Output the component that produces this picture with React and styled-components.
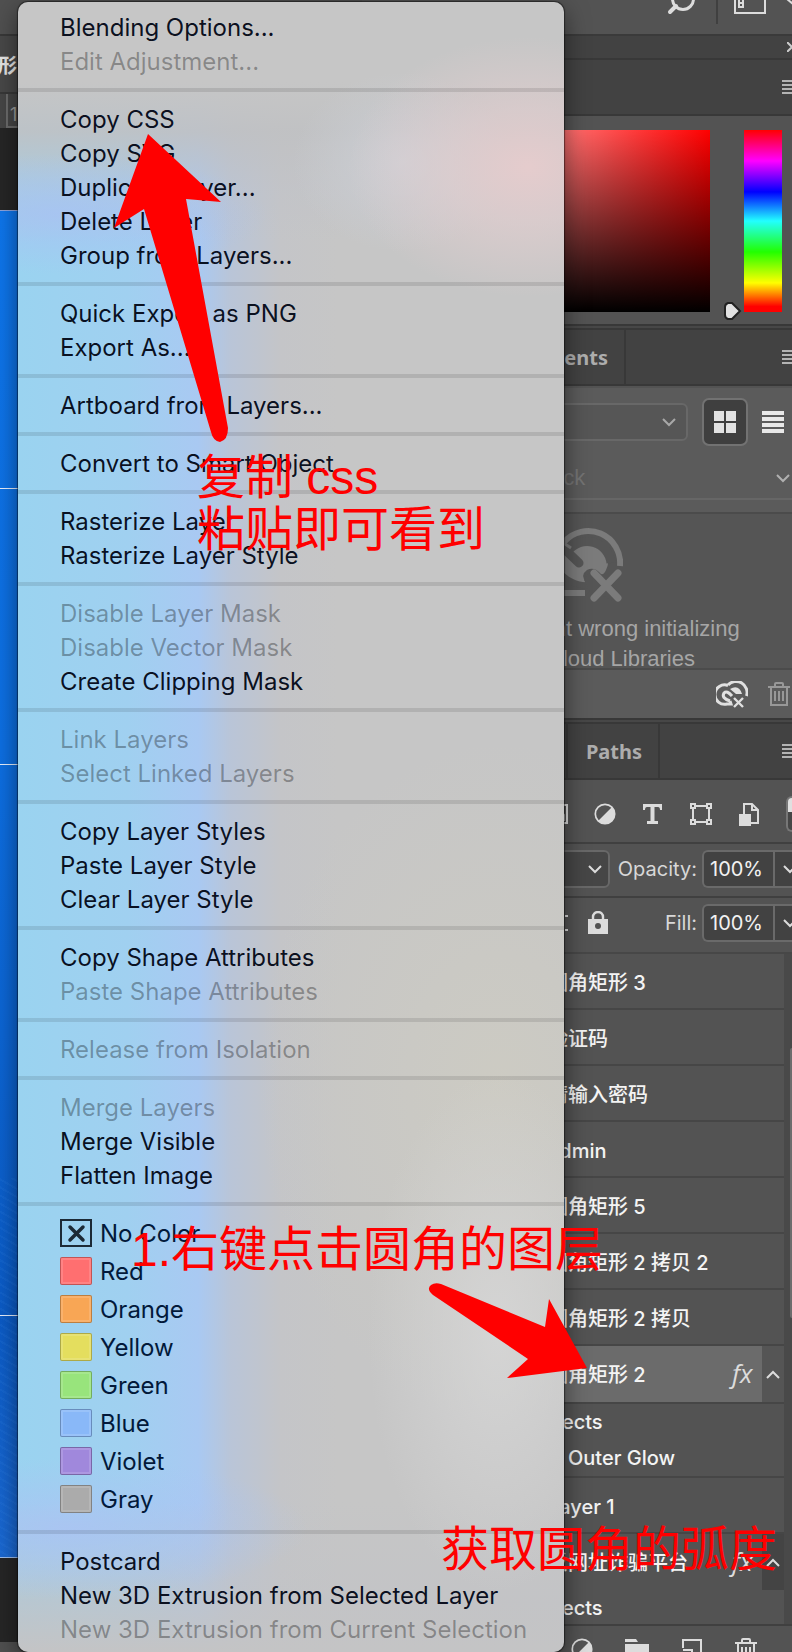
import React from 'react';
import styled, { createGlobalStyle } from 'styled-components';

const Global = createGlobalStyle`
  * { box-sizing: border-box; }
  body { margin: 0; background: #262626; }
  button, input, select { font: inherit; color: inherit; }
  button { border: 0; padding: 0; background: none; text-align: left; }
  svg { display: block; flex: none; }
`;

const App = styled.div`
  position: relative;
  display: flex;
  min-height: 100vh;
  overflow: hidden;
  font-family: Inter, "Noto Sans CJK SC", sans-serif;
  font-size: 20px;
  color: #e6e6e6;
`;

/* ---------- document area ---------- */
const Workspace = styled.main`
  flex: 1;
  min-width: 0;
  display: flex;
  flex-direction: column;
  overflow: hidden;
`;
const OptionsBar = styled.div`
  height: 36px;
  background: #505050;
  border-bottom: 2px solid #383838;
`;
const DocumentTab = styled.div`
  height: 58px;
  line-height: 60px;
  background: #484848;
  border-bottom: 2px solid #383838;
  font-weight: 700;
  text-indent: -3px;
`;
const Ruler = styled.div`
  height: 34px;
  margin-left: 6px;
  padding: 4px 0 0 2px;
  border-left: 2px solid #6c6c6c;
  border-bottom: 2px solid #6c6c6c;
  background: #464646;
  box-shadow: -6px 0 #464646;
  font-size: 18px;
  line-height: 34px;
  color: #9c9c9c;
`;
const Pasteboard = styled.div`
  flex: 1;
  display: flex;
  padding: 82px 0 84px;
  background: #262626;
`;
const Artboard = styled.div`
  flex: 1;
  display: grid;
  grid-template-rows: 278fr 276fr 552fr 242fr;
  border-top: 1px solid #8fa4dc;
  background:
    repeating-linear-gradient(30deg, transparent 0 5px, rgba(60, 140, 235, 0.12) 5px 7px) 0 100% / 100% 380px no-repeat,
    linear-gradient(#0e76ec, #0d6fe2 40%, #0b5bc6 82%, #1a68d2);
`;
const GuideCell = styled.div`
  border-bottom: 1px solid ${(p) => (p.$last ? '#9fc0ee' : '#e8f1ff')};
`;
const StatusBar = styled.div`
  height: 10px;
  background: #505050;
`;

/* ---------- panels ---------- */
const Dock = styled.aside`
  flex: none;
  width: 430px;
  display: flex;
  flex-direction: column;
  background: #535353;
`;
const TopBar = styled.div`
  display: flex;
  justify-content: flex-end;
  height: 36px;
  border-bottom: 2px solid #3a3a3a;
`;
const CollapseBar = styled.div`
  display: flex;
  justify-content: flex-end;
  align-items: center;
  height: 24px;
  background: #424242;
  border-bottom: 2px solid #383838;
`;
const Tabs = styled.div`
  display: flex;
  align-items: center;
  height: 56px;
  background: #424242;
  border-bottom: 2px solid #383838;
`;
const Tab = styled.button`
  width: ${(p) => p.$width}px;
  height: 54px;
  padding-right: 16px;
  border-right: 2px solid #383838;
  font-family: "Noto Sans", sans-serif;
  font-weight: 700;
  text-align: right;
  color: #adadad;
`;
const TabSpace = styled.div`
  flex: 1;
`;
const Divider = styled.div`
  height: 6px;
  border: solid #383838;
  border-width: 2px 0;
  background: #474747;
`;
const ColorPanel = styled.section`
  display: flex;
  align-items: flex-end;
  height: 208px;
  padding: 14px 10px 12px 18px;
`;
const ColorField = styled.div`
  flex: 1;
  height: 182px;
  background: linear-gradient(transparent, #000), linear-gradient(to right, #fff, #f00);
`;
const HueStrip = styled.div`
  width: 38px;
  height: 182px;
  background: linear-gradient(#f00, #f0f 17%, #00f 34%, #2ff 50%, #2f0 67%, #ff0 84%, #f00 97%);
`;
const HuePointer = styled.svg`
  margin: 0 2px 0 14px;
  transform: translateY(8px);
`;

const LibraryTools = styled.div`
  display: flex;
  align-items: center;
  gap: 14px;
  height: 72px;
  padding: 0 8px 2px 18px;
  background: #5b5b5b;
  border-top: 2px solid #535353;
`;
const SelectWrap = styled.div`
  position: relative;
  flex: 1;
  height: ${(p) => p.$height}px;
  border: 2px solid #686868;
  border-radius: 6px;
  background: ${(p) => p.$bg};
  select {
    width: 100%;
    height: 100%;
    border: 0;
    padding-left: 12px;
    background: none;
    appearance: none;
  }
  svg {
    position: absolute;
    right: ${(p) => p.$inset}px;
    top: 50%;
    margin-top: -4px;
    pointer-events: none;
  }
`;
const ViewButton = styled.button`
  display: flex;
  align-items: center;
  justify-content: center;
  width: ${(p) => (p.$active ? 46 : 22)}px;
  height: 48px;
  border-radius: 7px;
  border: ${(p) => (p.$active ? '2px solid #727272' : '0')};
  background: ${(p) => (p.$active ? '#3f3f3f' : 'none')};
`;
const StockSearch = styled.div`
  display: flex;
  align-items: center;
  height: 42px;
  padding-right: 2px;
  border-bottom: 2px solid #666;
  background: #5b5b5b;
  input {
    flex: 1;
    min-width: 0;
    padding: 0 0 0 24px;
    border: 0;
    background: none;
    font-family: "Liberation Sans", sans-serif;
    font-size: 22px;
  }
  input::placeholder { color: #747474; opacity: 1; }
`;
const StockGap = styled.div`
  height: 14px;
  border-bottom: 2px solid #4b4b4b;
  background: #5b5b5b;
`;
const LibraryMessage = styled.div`
  display: flex;
  flex-direction: column;
  align-items: center;
  height: 154px;
  padding-top: 13px;
  background: #555;
  p {
    margin: 11px 0 0;
    font-family: "Liberation Sans", sans-serif;
    font-size: 22px;
    line-height: 30px;
    text-align: center;
    color: #a6a6a6;
  }
`;
const LibraryFooter = styled.div`
  display: flex;
  justify-content: flex-end;
  align-items: center;
  gap: 20px;
  height: 50px;
  padding-right: 2px;
  border-top: 2px solid #4b4b4b;
  background: #5b5b5b;
`;
const FilterRow = styled.div`
  display: flex;
  justify-content: flex-end;
  align-items: center;
  gap: 26px;
  height: 64px;
  border-bottom: 2px solid #404040;
  padding-top: 6px;
`;
const ToggleEnd = styled.button`
  width: 6px;
  height: 36px;
  border: solid #777;
  border-width: 2px 0 2px 2px;
  border-radius: 6px 0 0 6px;
  background: linear-gradient(#e0e0e0 0 14px, #464646 14px);
`;
const PropertyRow = styled.div`
  display: flex;
  align-items: center;
  justify-content: flex-end;
  height: ${(p) => p.$height}px;
  padding: 0 0 ${(p) => p.$pad}px 18px;
  border-bottom: 2px solid ${(p) => p.$line};
`;
const FieldLabel = styled.label`
  width: 92px;
  padding-right: 5px;
  text-align: right;
  color: #d8d8d8;
`;
const Percent = styled.div`
  display: flex;
  height: 38px;
  width: 90px;
  border: solid #6a6a6a;
  border-width: 2px 0 2px 2px;
  border-radius: 6px 0 0 6px;
  background: #424242;
  overflow: hidden;
  input {
    width: 71px;
    padding: 0 0 0 6px;
    border: 0;
    border-right: 2px solid #6a6a6a;
    background: none;
    color: #f2f2f2;
  }
  button { padding-left: 8px; }
`;
const LockTools = styled.div`
  display: flex;
  align-items: center;
  gap: 20px;
  margin-right: 2px;
`;

const LayerArea = styled.div`
  display: flex;
  border-bottom: 2px solid #404040;
`;
const LayerList = styled.div`
  flex: 1;
  min-width: 0;
`;
const ScrollTrack = styled.div`
  width: 8px;
  padding: 94px 0 0 6px;
  background: #494949;
`;
const ScrollThumb = styled.div`
  height: 270px;
  border-radius: 2px 0 0 2px;
  background: #6c6c6c;
`;
const LayerRow = styled.div`
  display: flex;
  align-items: center;
  height: 56px;
  border-bottom: 2px solid ${(p) => (p.$selected ? '#6b6b6b' : p.$open ? '#535353' : '#464646')};
  background: ${(p) => (p.$selected ? '#6b6b6b' : '#535353')};
`;
const LayerName = styled.button`
  flex: 1;
  padding: 4px 0 0 186px;
  font-weight: 500;
  line-height: 30px;
  white-space: nowrap;
  color: #f4f4f4;
`;
const FxMark = styled.span`
  width: 30px;
  font-family: "Open Sans", sans-serif;
  font-size: 26px;
  font-style: italic;
  color: #dcdcdc;
`;
const Expander = styled.button`
  display: flex;
  align-items: center;
  align-self: stretch;
  justify-content: center;
  width: 22px;
  margin-bottom: -2px;
  background: ${(p) => (p.$dark ? '#444' : '#555')};
`;
const Effects = styled.div`
  display: flex;
  flex-direction: column;
  padding-left: 174px;
  height: ${(p) => p.$height}px;
  border: solid #464646;
  border-width: ${(p) => (p.$top ? 2 : 0)}px 0 ${(p) => (p.$bottom ? 2 : 0)}px;
  line-height: 36px;
  font-weight: 500;
  color: #f4f4f4;
  div + div { padding-left: 32px; }
`;
const ActionBar = styled.div`
  display: flex;
  justify-content: flex-end;
  gap: 32px;
  height: 26px;
  padding: 12px 35px 0 0;
  overflow: hidden;
`;

/* ---------- context menu ---------- */
const Menu = styled.div`
  position: absolute;
  top: 2px;
  left: 18px;
  right: 228px;
  padding: 8px 0 6px;
  border-radius: 10px;
  box-shadow: 0 0 1px 1px rgba(0, 0, 0, 0.45), 0 8px 24px rgba(0, 0, 0, 0.5);
  font-size: 24px;
  background:
    radial-gradient(ellipse 180px 130px at 510px 165px, #e5cccd, rgba(226, 206, 207, 0.65) 45%, transparent),
    radial-gradient(ellipse 110px 90px at 385px 160px, rgba(205, 208, 214, 0.9), transparent),
    radial-gradient(ellipse 130px 260px at 480px 1330px, rgba(214, 214, 214, 0.9), transparent),
    radial-gradient(ellipse 240px 340px at 480px 1080px, rgba(206, 204, 194, 0.8), transparent),
    radial-gradient(ellipse 210px 60px at 40px 212px, rgba(168, 194, 243, 0.8), transparent),
    radial-gradient(ellipse 240px 70px at 50px 1526px, rgba(170, 196, 243, 0.9), transparent),
    linear-gradient(#c6c6c6 80px, rgba(192, 193, 195, 0.9) 130px, rgba(192, 194, 200, 0.4) 190px, rgba(198, 198, 198, 0) 240px),
    linear-gradient(to top, #c4c4c5, rgba(194, 195, 198, 0.75) 50px, rgba(198, 198, 198, 0) 150px),
    linear-gradient(to right, #9ad3f0, #a0d0f0 110px, #a9c9f2 180px, #b9c5d8 212px, #c4c5c8 262px, #c6c6c6 320px);
`;
const MenuItem = styled.button`
  display: block;
  width: 100%;
  height: 34px;
  padding: 1px 0 0 42px;
  line-height: 34px;
  white-space: nowrap;
  color: ${(p) => (p.disabled ? 'rgba(0, 0, 0, 0.32)' : 'rgba(0, 5, 20, 0.95)')};
`;
const MenuLine = styled.hr`
  height: 4px;
  margin: 10px 0;
  border: 0;
  background: rgba(0, 0, 0, 0.1);
`;
const ColorItem = styled.button`
  display: flex;
  align-items: center;
  gap: 8px;
  width: 100%;
  height: 38px;
  padding: 0 0 4px 42px;
  color: #02193a;
`;
const Swatch = styled.span`
  width: 32px;
  height: 28px;
  border: 1px solid rgba(0, 0, 0, 0.24);
  border-radius: 2px;
  background: ${(p) => p.$color};
  box-shadow: inset 0 0 0 2px rgba(255, 255, 255, 0.14);
`;
const EmptySwatch = styled.svg`
  width: 32px;
  height: 28px;
`;

/* ---------- red annotations ---------- */
const Note = styled.p`
  position: absolute;
  left: ${(p) => p.$x}px;
  top: ${(p) => p.$y}px;
  margin: 0;
  font-family: "Liberation Sans", "Noto Sans CJK SC", sans-serif;
  font-size: 48px;
  line-height: 52px;
  white-space: nowrap;
  color: #f00;
  pointer-events: none;
`;
const Arrow = styled.svg`
  position: absolute;
  left: ${(p) => p.$x}px;
  top: ${(p) => p.$y}px;
  fill: #f00;
  pointer-events: none;
`;

/* ---------- icons ---------- */
const Chevron = ({ up, color = '#dcdcdc', weight = 2 }) => (
  <svg width="14" height="9" viewBox="0 0 14 9" fill="none" stroke={color} strokeWidth={weight}>
    <path d={up ? 'M1 8l6-6 6 6' : 'M1 1l6 6 6-6'} />
  </svg>
);
const PanelMenuIcon = () => (
  <svg width="10" height="14" viewBox="0 0 10 14" stroke="#b4b4b4" strokeWidth="2">
    <path d="M0 1h10M0 5h10M0 9h10M0 13h10" />
  </svg>
);
const ContrastIcon = () => (
  <svg width="22" height="22" viewBox="0 0 22 22">
    <circle cx="11" cy="11" r="9.7" fill="none" stroke="#dcdcdc" strokeWidth="1.7" />
    <path d="M18 4A9.9 9.9 0 0 1 4 18z" fill="#dcdcdc" />
  </svg>
);
const TrashIcon = ({ color }) => (
  <svg width="22" height="24" viewBox="0 0 22 24" fill="none" stroke={color} strokeWidth="2">
    <path d="M0 5h22M3 5v18h16V5M7 4V2q0-1 1-1h6q1 0 1 1v2M7 9v10M11 9v10M15 9v10" />
  </svg>
);
const CloudErrorLarge = () => (
  <svg width="92" height="76" viewBox="0 0 92 76">
    <path d="M38 24A20 20 0 0 1 75 43Q73 48 70 47Q63 39 56 43Q49 48 55 55Q43 59 29 45L22 37L34 21z" fill="#7b7b7b" />
    <path d="M37 24A24 24 0 0 1 80 36" fill="none" stroke="#555" strokeWidth="9" />
    <path d="M27 16L48 36" stroke="#555" strokeWidth="9" strokeLinecap="round" />
    <path d="M25 42C35 53 43 58 58 59" fill="none" stroke="#555" strokeWidth="6" />
    <g fill="none" stroke="#7b7b7b" strokeWidth="6">
      <path d="M33 15A32 32 0 0 1 89 39" />
      <path d="M31 15L40 21" strokeWidth="3" />
      <path d="M31 15A28 28 0 0 0 24 66H54" />
    </g>
    <path d="M53 53l4-6 7-2 7 5 8-7 7 5-6 9 7 9-7 8-10-7-9 7-6-6 4-4z" fill="#555" />
    <path d="M63 46l24 25M87 46L63 71" stroke="#7b7b7b" strokeWidth="7" strokeLinecap="round" />
  </svg>
);
const CloudErrorSmall = () => (
  <svg width="32" height="27" viewBox="0 0 32 27" fill="none" stroke="#e0e0e0">
    <path d="M12 4A11 11 0 0 1 30.500 15" strokeWidth="3" />
    <path d="M12 4.500A9.700 9.700 0 1 0 11 23H15L14 20" strokeWidth="3" />
    <path d="M14 20Q5 17 8 12Q11 9 16 15" strokeWidth="3" />
    <path d="M14 8Q23 3 26 13H20L14 8z" fill="#e0e0e0" stroke="none" />
    <path d="M18 17l9 9M27 17l-9 9" strokeWidth="2.4" />
  </svg>
);

/* ---------- data ---------- */
const GROUPS = [
  [['Blending Options...'], ['Edit Adjustment...', true]],
  [['Copy CSS'], ['Copy SVG'], ['Duplicate Layer...'], ['Delete Layer'], ['Group from Layers...']],
  [['Quick Export as PNG'], ['Export As...']],
  [['Artboard from Layers...']],
  [['Convert to Smart Object']],
  [['Rasterize Layer'], ['Rasterize Layer Style']],
  [['Disable Layer Mask', true], ['Disable Vector Mask', true], ['Create Clipping Mask']],
  [['Link Layers', true], ['Select Linked Layers', true]],
  [['Copy Layer Styles'], ['Paste Layer Style'], ['Clear Layer Style']],
  [['Copy Shape Attributes'], ['Paste Shape Attributes', true]],
  [['Release from Isolation', true]],
  [['Merge Layers', true], ['Merge Visible'], ['Flatten Image']],
];
const COLORS = [
  ['Red', '#ff6f70'],
  ['Orange', '#f8a655'],
  ['Yellow', '#e4de5e'],
  ['Green', '#98e47c'],
  ['Blue', '#89b8f8'],
  ['Violet', '#a088dc'],
  ['Gray', '#ababab'],
];
const LAYERS = ['圆角矩形 3', '验证码', '请输入密码', 'admin', '圆角矩形 5', '圆角矩形 2 拷贝 2', '圆角矩形 2 拷贝'];

const PercentField = ({ id, label }) => (
  <>
    <FieldLabel htmlFor={id}>{label}</FieldLabel>
    <Percent>
      <input id={id} defaultValue="100%" />
      <button aria-label={`${label} slider`}><Chevron /></button>
    </Percent>
  </>
);

export default function PhotoshopWindow() {
  return (
    <App>
      <Global />
      <Workspace>
        <OptionsBar />
        <DocumentTab>形</DocumentTab>
        <Ruler>1</Ruler>
        <Pasteboard>
          <Artboard>
            <GuideCell /><GuideCell /><GuideCell /><GuideCell $last />
          </Artboard>
        </Pasteboard>
        <StatusBar />
      </Workspace>

      <Dock>
        <TopBar>
          <svg width="126" height="34" viewBox="0 0 126 34" fill="none" stroke="#dcdcdc">
            <circle cx="17" cy="-1" r="10.5" strokeWidth="3" />
            <path d="M10 6l-6 6" strokeWidth="4" strokeLinecap="round" />
            <path d="M51 0v24" stroke="#404040" strokeWidth="2" />
            <path d="M69-6v19h30V-6M73-2h4v9h-4zM73 3h4" strokeWidth="2" />
            <path d="M121-1l6 5" strokeWidth="2" />
          </svg>
        </TopBar>
        <CollapseBar>
          <svg width="5" height="10" viewBox="0 0 5 10" fill="none" stroke="#ccc" strokeWidth="2"><path d="M0 0l5 5-5 5" /></svg>
        </CollapseBar>
        <Tabs><TabSpace /><PanelMenuIcon /></Tabs>

        <ColorPanel>
          <ColorField />
          <HuePointer width="18" height="18" viewBox="0 0 18 18">
            <path d="M4 1h4l8 8-8 8H4q-3-1-3-4V5q0-3 3-4z" fill="#e2e2e2" stroke="#222" strokeWidth="2" />
          </HuePointer>
          <HueStrip />
        </ColorPanel>

        <Divider />
        <Tabs>
          <Tab $width={264}>Adjustments</Tab>
          <TabSpace />
          <PanelMenuIcon />
        </Tabs>
        <LibraryTools>
          <SelectWrap $height={38} $bg="#565656" $inset={10}>
            <select aria-label="Library" />
            <Chevron color="#a8a8a8" />
          </SelectWrap>
          <ViewButton $active aria-label="Grid view">
            <svg width="22" height="22" fill="#e2e2e2"><path d="M0 0h10v10H0zM12 0h10v10H12zM0 12h10v10H0zM12 12h10v10H12z" /></svg>
          </ViewButton>
          <ViewButton aria-label="List view">
            <svg width="22" height="22" fill="#e8e8e8"><path d="M0 0h22v4H0zM0 6h22v4H0zM0 12h22v4H0zM0 18h22v4H0z" /></svg>
          </ViewButton>
        </LibraryTools>
        <StockSearch>
          <input aria-label="Search" placeholder="Search Adobe Stock" />
          <Chevron color="#b0b0b0" />
        </StockSearch>
        <StockGap />
        <LibraryMessage>
          <CloudErrorLarge />
          <p>Something went wrong initializing<br />Creative Cloud Libraries</p>
        </LibraryMessage>
        <LibraryFooter>
          <CloudErrorSmall />
          <TrashIcon color="#989898" />
        </LibraryFooter>

        <Divider />
        <Tabs>
          <Tab $width={206}>Channels</Tab>
          <Tab $width={92}>Paths</Tab>
          <TabSpace />
          <PanelMenuIcon />
        </Tabs>
        <FilterRow>
          <svg width="22" height="22" fill="none" stroke="#dcdcdc" strokeWidth="2"><path d="M1 2h20v18H1zM4 17l6-7 5 6 3-3v4z" /></svg>
          <ContrastIcon />
          <svg width="22" height="22" fill="#dcdcdc"><path d="M1 1h19v6h-2q0-3-2-3h-3.500v14H16v3H5v-3h3.500V4H5Q3 4 3 7H1z" /></svg>
          <svg width="22" height="22" fill="none" stroke="#dcdcdc" strokeWidth="2">
            <path d="M5 3h12M5 19h12M3 5v12M19 5v12M1 1h4v4H1zM17 1h4v4h-4zM1 17h4v4H1zM17 17h4v4h-4z" />
          </svg>
          <svg width="22" height="24" fill="none" stroke="#dcdcdc" strokeWidth="2">
            <path d="M6 12V2h8l6 6v13h-7M14 2v6h6" />
            <path d="M1 12h12v12H1z" fill="#dcdcdc" stroke="none" />
          </svg>
          <ToggleEnd aria-label="Toggle layer filtering" />
        </FilterRow>
        <PropertyRow $height={54} $pad={2} $line="#404040">
          <SelectWrap $height={38} $bg="#464646" $inset={6}>
            <select aria-label="Blend mode" />
            <Chevron />
          </SelectWrap>
          <PercentField id="opacity" label="Opacity:" />
        </PropertyRow>
        <PropertyRow $height={56} $pad={4} $line="#474747">
          <LockTools>
            <svg width="16" height="18" stroke="#dcdcdc" strokeWidth="2"><path d="M0 2h3M7 2h3M13 2h3M0 16h3M7 16h3M13 16h3" /></svg>
            <svg width="20" height="24" viewBox="0 0 20 24">
              <path d="M5 9V6a5 5 0 0 1 10 0v3" fill="none" stroke="#dcdcdc" strokeWidth="2.400" />
              <path d="M0 8h20v15H0z" fill="#dcdcdc" /><circle cx="10" cy="15" r="3" fill="#535353" />
            </svg>
          </LockTools>
          <PercentField id="fill" label="Fill:" />
        </PropertyRow>

        <LayerArea>
          <LayerList>
            {LAYERS.map((name) => (
              <LayerRow key={name}><LayerName>{name}</LayerName></LayerRow>
            ))}
            <LayerRow $selected>
              <LayerName>圆角矩形 2</LayerName>
              <FxMark>fx</FxMark>
              <Expander aria-label="Collapse effects"><Chevron up /></Expander>
            </LayerRow>
            <Effects $height={76} $top $bottom><div>Effects</div><div>Outer Glow</div></Effects>
            <LayerRow><LayerName>Layer 1</LayerName></LayerRow>
            <LayerRow $open>
              <LayerName>反网址诈骗平台</LayerName>
              <FxMark>fx</FxMark>
              <Expander $dark aria-label="Collapse effects"><Chevron up /></Expander>
            </LayerRow>
            <Effects $height={34}><div>Effects</div></Effects>
          </LayerList>
          <ScrollTrack><ScrollThumb /></ScrollTrack>
        </LayerArea>
        <ActionBar>
          <ContrastIcon />
          <svg width="24" height="24" fill="#dcdcdc"><path d="M0 1h11l2 3H0zM0 6h24v18H0z" /></svg>
          <svg width="22" height="24" fill="none" stroke="#dcdcdc" strokeWidth="2"><path d="M2 10V2h18v20h-8M2 12h9v11" /></svg>
          <TrashIcon color="#dcdcdc" />
        </ActionBar>
      </Dock>

      <Menu role="menu">
        {GROUPS.map((group) => (
          <React.Fragment key={group[0][0]}>
            {group.map(([label, off]) => (
              <MenuItem role="menuitem" key={label} disabled={off}>{label}</MenuItem>
            ))}
            <MenuLine />
          </React.Fragment>
        ))}
        <ColorItem role="menuitem">
          <EmptySwatch viewBox="0 0 32 28" fill="none" stroke="#1c2a36">
            <path d="M1 1h30v26H1z" strokeWidth="2" />
            <path d="M10 8l13 13M23 8L10 21" strokeWidth="3.500" strokeLinecap="round" />
          </EmptySwatch>
          No Color
        </ColorItem>
        {COLORS.map(([name, color]) => (
          <ColorItem role="menuitem" key={name}><Swatch $color={color} />{name}</ColorItem>
        ))}
        <MenuLine />
        <MenuItem role="menuitem">Postcard</MenuItem>
        <MenuItem role="menuitem">New 3D Extrusion from Selected Layer</MenuItem>
        <MenuItem role="menuitem" disabled>New 3D Extrusion from Current Selection</MenuItem>
      </Menu>

      <Arrow $x={114} $y={134} width="116" height="310">
        <path d="M34 0L107 68L72 65L114 294Q114 306 106 308Q99 307 97 298L30 75L0 94z" />
      </Arrow>
      <Note $x={197} $y={452}>复制 css<br />粘贴即可看到</Note>
      <Note $x={131} $y={1224}>1.右键点击圆角的图层</Note>
      <Arrow $x={428} $y={1282} width="160" height="98">
        <path d="M3 3Q7 0 13 2L117 45L121 17L159 86L79 96L100 77L5 13Q-2 7 3 3z" />
      </Arrow>
      <Note $x={441} $y={1524}>获取圆角的弧度</Note>
    </App>
  );
}
